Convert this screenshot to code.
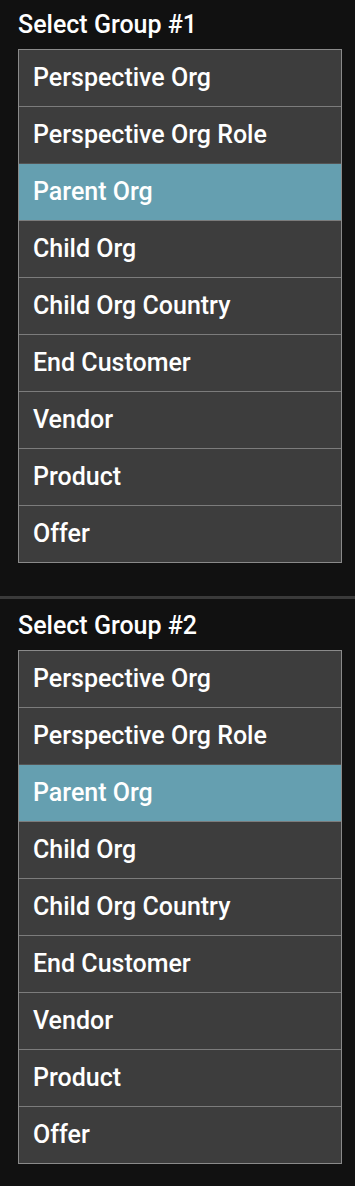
const options = [
  "Perspective Org",
  "Perspective Org Role",
  "Parent Org",
  "Child Org",
  "Child Org Country",
  "End Customer",
  "Vendor",
  "Product",
  "Offer",
];

function GroupSelect({ title, selected, top }: { title: string; selected: string; top: string }) {
  return (
    <section className={top + " pl-[18px] pr-[13px] pb-[33px]"}>
      <h2 className="text-[25px] leading-[32px] text-white mb-[8px]">{title}</h2>
      <ul className="border border-[#8a8a8a] bg-[#3d3d3d]">
        {options.map((opt, i) => {
          const active = opt === selected;
          return (
            <li
              key={opt}
              className={
                (i > 0 ? "border-t border-[#7c7c7c] " : "") +
                (active ? "bg-[#659fb0] border-t-[#555] " : "") +
                "box-content h-[56px] flex items-center pl-[14px] text-[25px] text-white"
              }
            >
              {opt}
            </li>
          );
        })}
      </ul>
    </section>
  );
}

export default function App() {
  return (
    <div className="min-h-[1186px] bg-[#111111] font-['Roboto',sans-serif] font-medium">
      <GroupSelect title="Select Group #1" selected="Parent Org" top="pt-[9px]" />
      <div className="h-[3px] bg-[#3a3a3a]" />
      <GroupSelect title="Select Group #2" selected="Parent Org" top="pt-[11px]" />
    </div>
  );
}
